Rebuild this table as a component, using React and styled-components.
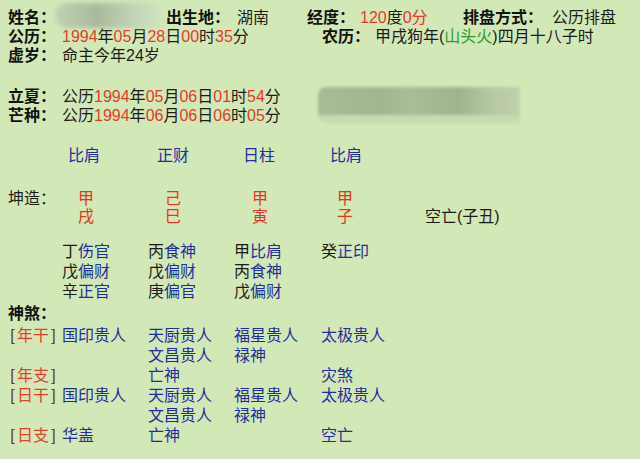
import styled, { createGlobalStyle } from "styled-components";

const GlobalStyle = createGlobalStyle`
  body {
    margin: 0;
    background: #d3e8b7;
  }
`;

const Page = styled.div`
  width: 640px;
  height: 459px;
  box-sizing: border-box;
  padding: 8px 8px 0;
  overflow: hidden;
  background: #d3e8b7;
  font-family: "Liberation Sans", "Noto Sans CJK SC", sans-serif;
  font-size: 16px;
  color: #1b1b1b;
`;

const Line = styled.div`
  display: flex;
  align-items: flex-start;
  height: 19px;
  line-height: 19px;
  white-space: nowrap;
`;

const Cell = styled.div`
  display: flex;
  flex: none;
  width: ${(p) => (p.$w ? `${p.$w}px` : "auto")};
`;

const Label = styled.span`
  flex: none;
  width: ${(p) => p.$w || 54}px;
  font-weight: 700;
  color: #111;
`;

const Red = styled.span`
  color: #e23b2a;
`;

const Green = styled.span`
  color: #2f9a2f;
`;

const NameBlur = styled.div`
  flex: none;
  width: 105px;
  height: 25px;
  margin: -5px 0 -1px -7px;
  border-radius: 12px 4px 4px 12px;
  background: linear-gradient(
    to right,
    #c2d2b2 0%,
    #b4c4a6 22%,
    #a9b99c 40%,
    #b8c8aa 60%,
    #c6d6b8 80%,
    #cfe2bd 100%
  );
  filter: blur(2px);
`;

const Solar = styled.div`
  display: flex;
  align-items: flex-start;
  margin-top: 22px;
`;

const SolarText = styled.div`
  width: 310px;
  flex: none;
`;

const TermBlur = styled.div`
  flex: none;
  width: 202px;
  height: 36px;
  border-radius: 8px 0 0 8px;
  background: linear-gradient(to bottom, transparent 78%, #c4dcae 78%),
    linear-gradient(
      to right,
      #a8ba96 0%,
      #a2b591 30%,
      #aabd98 45%,
      #a0b38f 70%,
      #b6c7a3 85%,
      #c0d0ad 100%
    );
  filter: blur(1.5px);
`;

const Grid = styled.div`
  display: grid;
  grid-template-columns: 54px 86px 86px 87px 87px 1fr;
  line-height: ${(p) => p.$lh || 20}px;
  margin-top: ${(p) => p.$mt || 0}px;
  white-space: nowrap;
`;

const TenGod = styled.span`
  padding-left: ${(p) => p.$pl}px;
  color: #1f2d9e;
`;

const Pillar = styled.span`
  padding-left: ${(p) => p.$pl || 16}px;
  color: #e2361f;
`;

const Plain = styled.span`
  padding-left: ${(p) => p.$pl || 0}px;
  color: #1b1b1b;
`;

const Hidden = styled.span`
  color: #1f2d9e;
`;

const Stem = styled.span`
  color: #1b1b1b;
`;

const Star = styled.span`
  color: #1f2d9e;
`;

const Tag = styled.span`
  color: #e2402a;
`;

const Bracket = styled.span`
  display: inline-block;
  width: 9px;
  text-align: center;
  color: #6b3a2e;
`;

const Heading = styled.div`
  font-weight: 700;
  color: #111;
  line-height: 20px;
  margin-top: ${(p) => p.$mt || 0}px;
`;

const hiddenRows = [
  [["丁", "伤官"], ["丙", "食神"], ["甲", "比肩"], ["癸", "正印"]],
  [["戊", "偏财"], ["戊", "偏财"], ["丙", "食神"], null],
  [["辛", "正官"], ["庚", "偏官"], ["戊", "偏财"], null],
];

const starRows = [
  ["年干", "国印贵人", "天厨贵人", "福星贵人", "太极贵人"],
  [null, null, "文昌贵人", "禄神", null],
  ["年支", null, "亡神", null, "灾煞"],
  ["日干", "国印贵人", "天厨贵人", "福星贵人", "太极贵人"],
  [null, null, "文昌贵人", "禄神", null],
  ["日支", "华盖", "亡神", null, "空亡"],
];

const App = () => {
  return (
    <Page>
      <GlobalStyle />

      <Line>
        <Cell $w={158}>
          <Label>姓名：</Label>
          <NameBlur />
        </Cell>
        <Cell $w={141}>
          <Label $w={71}>出生地：</Label>
          湖南
        </Cell>
        <Cell $w={156}>
          <Label $w={53}>经度：</Label>
          <span>
            <Red>120</Red>度<Red>0分</Red>
          </span>
        </Cell>
        <Cell>
          <Label $w={89}>排盘方式：</Label>
          公历排盘
        </Cell>
      </Line>
      <Line>
        <Cell $w={314}>
          <Label>公历：</Label>
          <span>
            <Red>1994</Red>年<Red>05</Red>月<Red>28</Red>日<Red>00</Red>时
            <Red>35</Red>分
          </span>
        </Cell>
        <Cell>
          <Label $w={53}>农历：</Label>
          <span>
            甲戌狗年(<Green>山头火</Green>)四月十八子时
          </span>
        </Cell>
      </Line>
      <Line>
        <Label>虚岁：</Label>
        命主今年24岁
      </Line>

      <Solar>
        <SolarText>
          <Line>
            <Label>立夏：</Label>
            <span>
              公历<Red>1994</Red>年<Red>05</Red>月<Red>06</Red>日<Red>01</Red>时
              <Red>54</Red>分
            </span>
          </Line>
          <Line>
            <Label>芒种：</Label>
            <span>
              公历<Red>1994</Red>年<Red>06</Red>月<Red>06</Red>日<Red>06</Red>时
              <Red>05</Red>分
            </span>
          </Line>
        </SolarText>
        <TermBlur />
      </Solar>

      <Grid $mt={21}>
        <span />
        <TenGod $pl={6}>比肩</TenGod>
        <TenGod $pl={9}>正财</TenGod>
        <TenGod $pl={9}>日柱</TenGod>
        <TenGod $pl={9}>比肩</TenGod>
      </Grid>

      <Grid $mt={24} $lh={18}>
        <Plain>坤造：</Plain>
        <Pillar>甲</Pillar>
        <Pillar $pl={17}>己</Pillar>
        <Pillar $pl={18}>甲</Pillar>
        <Pillar>甲</Pillar>
        <span />
        <span />
        <Pillar>戌</Pillar>
        <Pillar $pl={17}>巳</Pillar>
        <Pillar $pl={18}>寅</Pillar>
        <Pillar>子</Pillar>
        <Plain $pl={17}>空亡(子丑)</Plain>
      </Grid>

      <Grid $mt={16}>
        {hiddenRows.map((row, r) => [
          <span key={`h${r}`} />,
          ...row.map((item, c) =>
            item ? (
              <Hidden key={`${r}-${c}`}>
                <Stem>{item[0]}</Stem>
                {item[1]}
              </Hidden>
            ) : (
              <span key={`${r}-${c}`} />
            )
          ),
          <span key={`t${r}`} />,
        ])}
      </Grid>

      <Heading $mt={2}>神煞：</Heading>

      <Grid $mt={2}>
        {starRows.map((row, r) => [
          row[0] ? (
            <span key={`l${r}`}>
              <Bracket>[</Bracket>
              <Tag>{row[0]}</Tag>
              <Bracket>]</Bracket>
            </span>
          ) : (
            <span key={`l${r}`} />
          ),
          ...row.slice(1).map((name, c) =>
            name ? <Star key={`${r}-${c}`}>{name}</Star> : <span key={`${r}-${c}`} />
          ),
          <span key={`t${r}`} />,
        ])}
      </Grid>
    </Page>
  );
};

export default App;
